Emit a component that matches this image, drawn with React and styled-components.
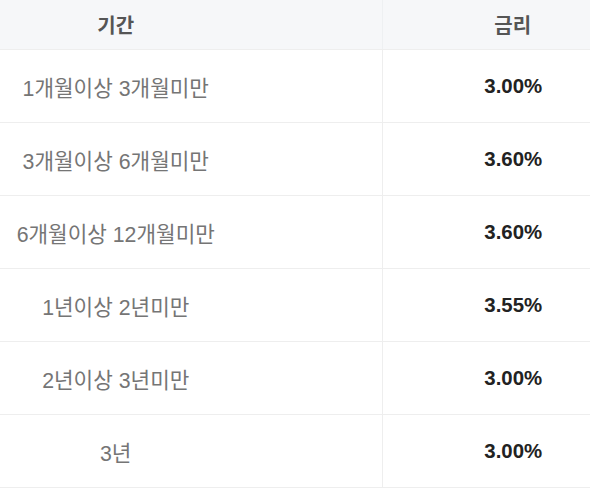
import styled, { createGlobalStyle } from 'styled-components';

const GlobalStyle = createGlobalStyle`
  html, body {
    margin: 0;
    padding: 0;
    background: #ffffff;
  }
  body {
    font-family: "Liberation Sans", "Noto Sans CJK KR", sans-serif;
  }
`;

const Table = styled.table`
  width: 590px;
  border-collapse: collapse;
  table-layout: fixed;
`;

const HeadRow = styled.tr`
  background: #f6f7f9;
`;

const HeadCell = styled.th`
  height: 49px;
  padding: 0 ${props => props.$side === 'left' ? '150px' : '0'} 0 ${props => props.$side === 'right' ? '53px' : '0'};
  text-align: center;
  font-size: 20px;
  font-weight: 700;
  color: #555;
  border-left: ${props => props.$side === 'right' ? '1px solid #eef0f2' : 'none'};
  border-bottom: 1px solid #eeeeee;
`;

const Row = styled.tr`
  border-bottom: 1px solid #eeeeee;
`;

const PeriodCell = styled.td`
  height: 72px;
  padding: 0 150px 0 0;
  text-align: center;
  font-size: 21.3px;
  color: #757575;
`;

const RateCell = styled.td`
  height: 72px;
  padding: 0 0 0 54px;
  text-align: center;
  font-size: 20.4px;
  font-weight: 700;
  color: #222;
  border-left: 1px solid #eeeeee;
`;

const rates = [
  { period: '1개월이상 3개월미만', rate: '3.00%' },
  { period: '3개월이상 6개월미만', rate: '3.60%' },
  { period: '6개월이상 12개월미만', rate: '3.60%' },
  { period: '1년이상 2년미만', rate: '3.55%' },
  { period: '2년이상 3년미만', rate: '3.00%' },
  { period: '3년', rate: '3.00%' },
];

export default function App() {
  return (
    <>
      <GlobalStyle />
      <Table>
        <colgroup>
          <col style={{ width: '382px' }} />
          <col />
        </colgroup>
        <thead>
          <HeadRow>
            <HeadCell $side="left">기간</HeadCell>
            <HeadCell $side="right">금리</HeadCell>
          </HeadRow>
        </thead>
        <tbody>
          {rates.map((r) => (
            <Row key={r.period}>
              <PeriodCell>{r.period}</PeriodCell>
              <RateCell>{r.rate}</RateCell>
            </Row>
          ))}
        </tbody>
      </Table>
    </>
  );
}
